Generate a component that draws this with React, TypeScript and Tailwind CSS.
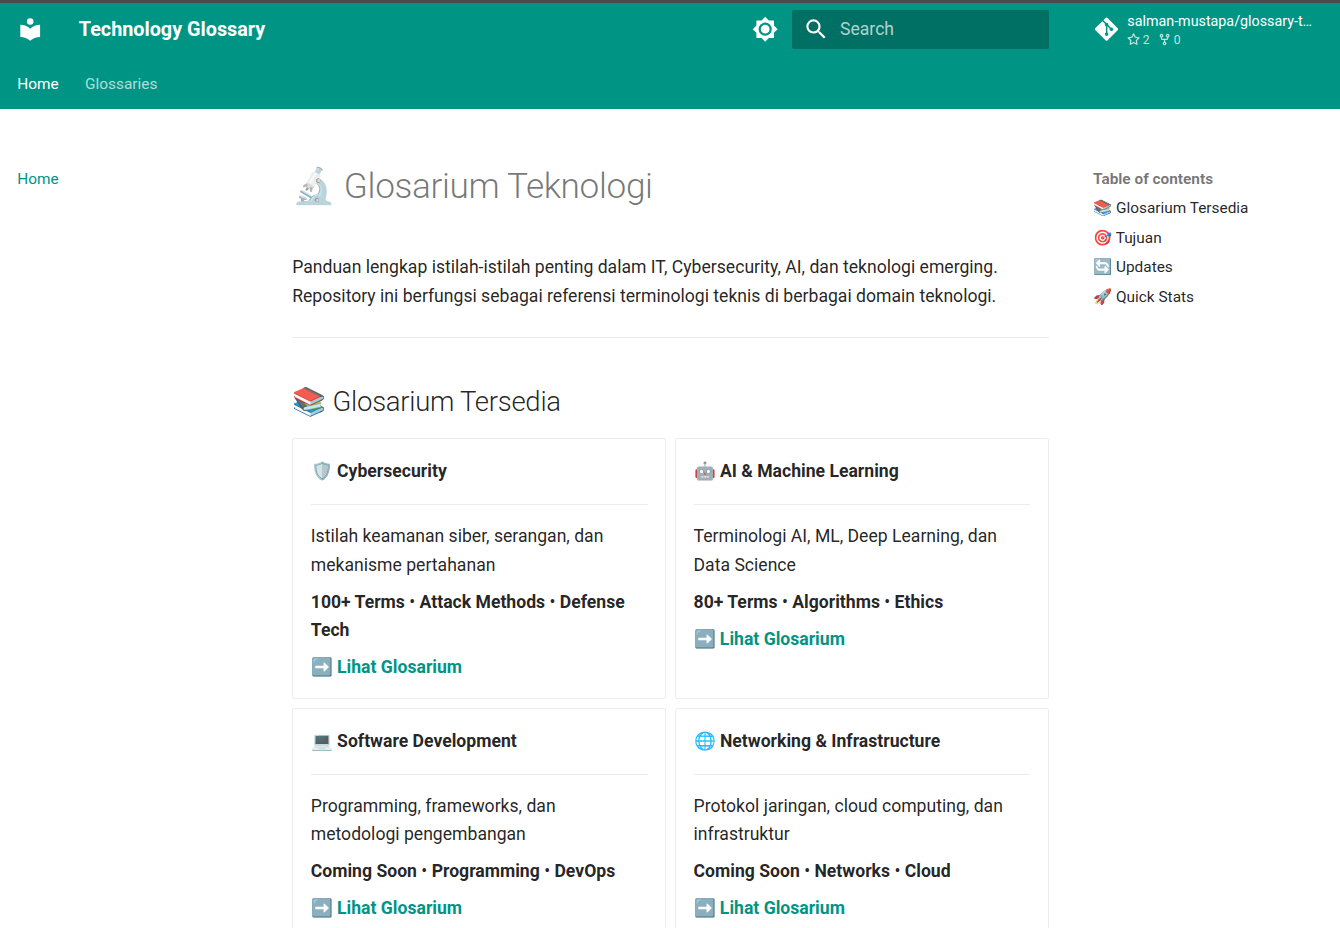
import React from "react";
import { FaGitAlt } from "react-icons/fa";

type IconProps = { d: string; size?: 24 | 16; className?: string };

function Icon({ d, size = 24, className }: IconProps) {
  return (
    <svg viewBox={`0 0 ${size} ${size}`} fill="currentColor" className={className} aria-hidden="true">
      <path d={d} />
    </svg>
  );
}

const paths = {
  library:
    "M12 8a3 3 0 0 0 3-3 3 3 0 0 0-3-3 3 3 0 0 0-3 3 3 3 0 0 0 3 3m0 3.54C9.64 9.35 6.5 8 3 8v11c3.5 0 6.64 1.35 9 3.54 2.36-2.19 5.5-3.54 9-3.54V8c-3.5 0-6.64 1.35-9 3.54Z",
  brightness:
    "M12 8a4 4 0 0 0-4 4 4 4 0 0 0 4 4 4 4 0 0 0 4-4 4 4 0 0 0-4-4m0 10a6 6 0 0 1-6-6 6 6 0 0 1 6-6 6 6 0 0 1 6 6 6 6 0 0 1-6 6m8-9.31V4h-4.69L12 .69 8.69 4H4v4.69L.69 12 4 15.31V20h4.69L12 23.31 15.31 20H20v-4.69L23.31 12 20 8.69Z",
  magnify:
    "M9.5 3A6.5 6.5 0 0 1 16 9.5c0 1.61-.59 3.09-1.56 4.23l.27.27h.79l5 5-1.5 1.5-5-5v-.79l-.27-.27A6.516 6.516 0 0 1 9.5 16 6.5 6.5 0 0 1 3 9.5 6.5 6.5 0 0 1 9.5 3m0 2C7 5 5 7 5 9.5S7 14 9.5 14 14 12 14 9.5 12 5 9.5 5Z",
  star: "M8 .25a.75.75 0 0 1 .673.418l1.882 3.815 4.21.612a.75.75 0 0 1 .416 1.279l-3.046 2.97.719 4.192a.751.751 0 0 1-1.088.791L8 12.347l-3.766 1.98a.75.75 0 0 1-1.088-.79l.72-4.194L.818 6.374a.75.75 0 0 1 .416-1.28l4.21-.611L7.327.668A.75.75 0 0 1 8 .25Zm0 2.445L6.615 5.5a.75.75 0 0 1-.564.41l-3.097.45 2.24 2.184a.75.75 0 0 1 .216.664l-.528 3.084 2.769-1.456a.75.75 0 0 1 .698 0l2.77 1.456-.53-3.084a.75.75 0 0 1 .216-.664l2.24-2.183-3.096-.45a.75.75 0 0 1-.564-.41L8 2.694Z",
  fork: "M5 5.372v.878c0 .414.336.75.75.75h4.5a.75.75 0 0 0 .75-.75v-.878a2.25 2.25 0 1 1 1.5 0v.878a2.25 2.25 0 0 1-2.25 2.25h-1.5v2.128a2.251 2.251 0 1 1-1.5 0V8.5h-1.5A2.25 2.25 0 0 1 3.5 6.25v-.878a2.25 2.25 0 1 1 1.5 0ZM5 3.25a.75.75 0 1 0-1.5 0 .75.75 0 0 0 1.5 0Zm6.75.75a.75.75 0 1 0 0-1.5.75.75 0 0 0 0 1.5Zm-3 8.75a.75.75 0 1 0-1.5 0 .75.75 0 0 0 1.5 0Z",
};

const cards = [
  {
    emoji: "🛡️",
    title: "Cybersecurity",
    text: "Istilah keamanan siber, serangan, dan mekanisme pertahanan",
    tags: ["100+ Terms", "Attack Methods", "Defense Tech"],
  },
  {
    emoji: "🤖",
    title: "AI & Machine Learning",
    text: "Terminologi AI, ML, Deep Learning, dan Data Science",
    tags: ["80+ Terms", "Algorithms", "Ethics"],
  },
  {
    emoji: "💻",
    title: "Software Development",
    text: "Programming, frameworks, dan metodologi pengembangan",
    tags: ["Coming Soon", "Programming", "DevOps"],
  },
  {
    emoji: "🌐",
    title: "Networking & Infrastructure",
    text: "Protokol jaringan, cloud computing, dan infrastruktur",
    tags: ["Coming Soon", "Networks", "Cloud"],
  },
];

const toc = ["📚 Glosarium Tersedia", "🎯 Tujuan", "🔄 Updates", "🚀 Quick Stats"];

function Header() {
  return (
    <header className="h-[108.6px] shrink-0 border-t-[3px] border-[#4a4a4a] bg-[#009485] text-white">
      <div className="flex h-[52.8px] items-center">
        <Icon d={paths.library} className="ml-[17px] size-[26.4px]" />
        <div className="ml-[35.4px] grow text-[19.8px] font-bold">Technology Glossary</div>
        <Icon d={paths.brightness} className="mr-[13.8px] size-[26.4px]" />
        <div className="flex h-[39px] w-[257px] items-center rounded-[2px] bg-[#006f64] pl-[11px]">
          <Icon d={paths.magnify} className="size-[26.4px]" />
          <span className="ml-[10.6px] text-[17.6px] text-white/70">Search</span>
        </div>
        <div className="ml-[45.8px] flex w-[245.2px] items-center">
          <FaGitAlt className="h-[26.4px] w-[23.1px]" />
          <div className="ml-[9.4px] w-[186px] pt-[1.4px]">
            <div className="truncate text-[14.3px] leading-[18px]">salman-mustapa/glossary-tech</div>
            <div className="flex h-[18px] items-center pt-[1px] text-[12.1px] leading-[18px] text-white/75">
              <Icon d={paths.star} size={16} className="mr-[2.2px] size-[13.2px]" />2
              <Icon d={paths.fork} size={16} className="mr-[2.2px] ml-[8.8px] size-[13.2px]" />0
            </div>
          </div>
        </div>
      </div>
      <nav className="flex h-[52.8px] items-center gap-[26.4px] pt-[4.4px] pl-[17.2px] text-[15.4px]">
        <a>Home</a>
        <a className="text-white/70">Glossaries</a>
      </nav>
    </header>
  );
}

function Emoji({ children }: { children: string }) {
  return <span className="-mr-[.45px] pl-[.45px]">{children}</span>;
}

function Card({ emoji, title, text, tags }: (typeof cards)[number]) {
  return (
    <li className="rounded-[2px] border border-black/[.07] p-[17.6px]">
      <p className="font-bold">
        <Emoji>{emoji}</Emoji> {title}
      </p>
      <hr className="mt-[18.73px] mb-[17.6px] border-black/[.07]" />
      <p>{text}</p>
      <p className="mt-[8.75px] font-bold">
        {tags.map((tag, i) => (
          <React.Fragment key={tag}>
            {i > 0 && <span className="font-normal"> • </span>}
            {tag}
          </React.Fragment>
        ))}
      </p>
      <p className="mt-[8.85px] font-bold">
        <a className="text-[#009485]">
          <Emoji>➡️</Emoji> Lihat Glosarium
        </a>
      </p>
    </li>
  );
}

export default function App() {
  return (
    <div className="flex h-[928px] w-[1340px] flex-col overflow-hidden bg-white font-[Roboto,'Noto_Color_Emoji',sans-serif] text-black/87 antialiased">
      <Header />
      <div className="flex items-start">
        <nav className="w-[292.2px] shrink-0 pt-[60px] pl-[17.2px] text-[15.4px] leading-[20.02px] text-[#009485]">
          Home
        </nav>
        <main className="w-[756.8px] shrink-0 pt-[55px] text-[17.6px] leading-[28.16px]">
          <h1 className="mb-[44px] text-[35.2px] leading-[45.76px] font-light tracking-[-.01em] text-black/54">
            🔬 Glosarium Teknologi
          </h1>
          <p>
            Panduan lengkap istilah-istilah penting dalam IT, Cybersecurity, AI, dan teknologi emerging. Repository
            ini berfungsi sebagai referensi terminologi teknis di berbagai domain teknologi.
          </p>
          <hr className="mt-[27.62px] border-black/[.07]" />
          <h2 className="mt-[44.5px] mb-[17.1px] text-[27.5px] leading-[38.5px] font-light tracking-[-.01em]">
            📚 Glosarium Tersedia
          </h2>
          <ul className="grid grid-cols-2 gap-x-[8.8px] gap-y-[8.87px]">
            {cards.map((card) => (
              <Card key={card.title} {...card} />
            ))}
          </ul>
        </main>
        <aside className="ml-[44px] pt-[60px] text-[15.4px] leading-[20.02px]">
          <h3 className="font-bold text-black/54">Table of contents</h3>
          <ul className="-mt-[.1px]">
            {toc.map((item) => (
              <li key={item} className="pt-[9.625px]">
                {item}
              </li>
            ))}
          </ul>
        </aside>
      </div>
    </div>
  );
}
